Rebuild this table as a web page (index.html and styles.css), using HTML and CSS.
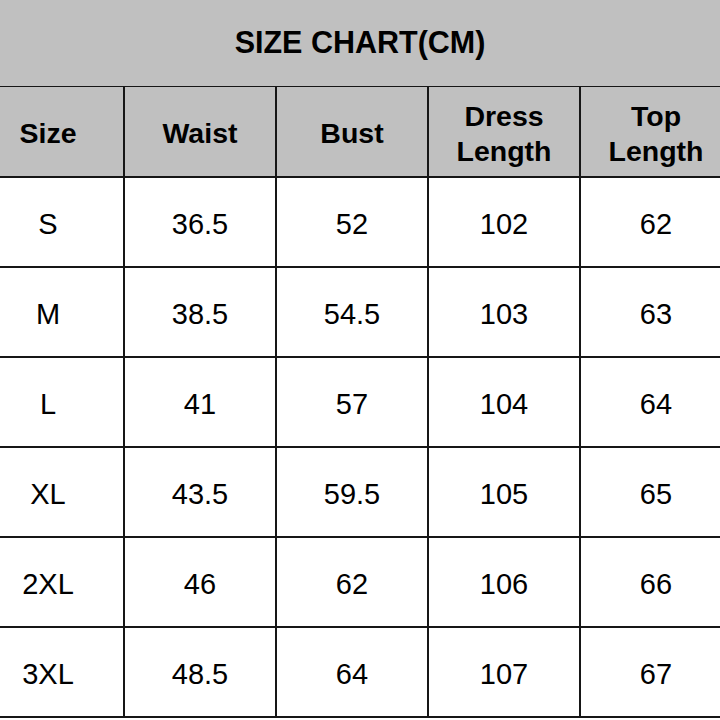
FILE: index.html
```html
<!DOCTYPE html>
<html>
<head>
<meta charset="utf-8">
<link rel="stylesheet" href="styles.css">
</head>
<body>
<div class="chart">
  <div class="title">SIZE CHART(CM)</div>
  <table class="grid">
    <colgroup><col><col><col><col><col></colgroup>
    <thead>
      <tr>
        <th>Size</th>
        <th>Waist</th>
        <th>Bust</th>
        <th>Dress<br>Length</th>
        <th>Top<br>Length</th>
      </tr>
    </thead>
    <tbody>
      <tr><td>S</td><td>36.5</td><td>52</td><td>102</td><td>62</td></tr>
      <tr><td>M</td><td>38.5</td><td>54.5</td><td>103</td><td>63</td></tr>
      <tr><td>L</td><td>41</td><td>57</td><td>104</td><td>64</td></tr>
      <tr><td>XL</td><td>43.5</td><td>59.5</td><td>105</td><td>65</td></tr>
      <tr><td>2XL</td><td>46</td><td>62</td><td>106</td><td>66</td></tr>
      <tr><td>3XL</td><td>48.5</td><td>64</td><td>107</td><td>67</td></tr>
    </tbody>
  </table>
</div>
</body>
</html>
```
FILE: styles.css
```css
html, body {
  margin: 0;
  padding: 0;
  background: #ffffff;
}
.chart {
  width: 720px;
  height: 720px;
  overflow: hidden;
  font-family: "Liberation Sans", Arial, sans-serif;
  color: #000;
}
.title {
  height: 88px;
  background: #c0c0c0;
  display: flex;
  align-items: center;
  justify-content: center;
  font-weight: bold;
  font-size: 30.5px;
  padding-bottom: 2px;
  box-sizing: border-box;
  border-bottom: 2px solid #161616;
}
.grid {
  border-collapse: collapse;
  table-layout: fixed;
  width: 760px;
  margin-left: -29px;
  margin-top: -1px;
}
.grid col {
  width: 152px;
}
.grid th,
.grid td {
  border: 2px solid #161616;
  text-align: center;
  vertical-align: middle;
  padding: 4px 0 0 0;
  height: 90px;
  box-sizing: border-box;
}
.grid thead tr:first-child th {
  border-top: none;
}
.grid th {
  background: #c0c0c0;
  font-weight: bold;
  font-size: 28.5px;
  line-height: 35px;
}
.grid td {
  font-size: 29px;
  font-weight: normal;
}
```
